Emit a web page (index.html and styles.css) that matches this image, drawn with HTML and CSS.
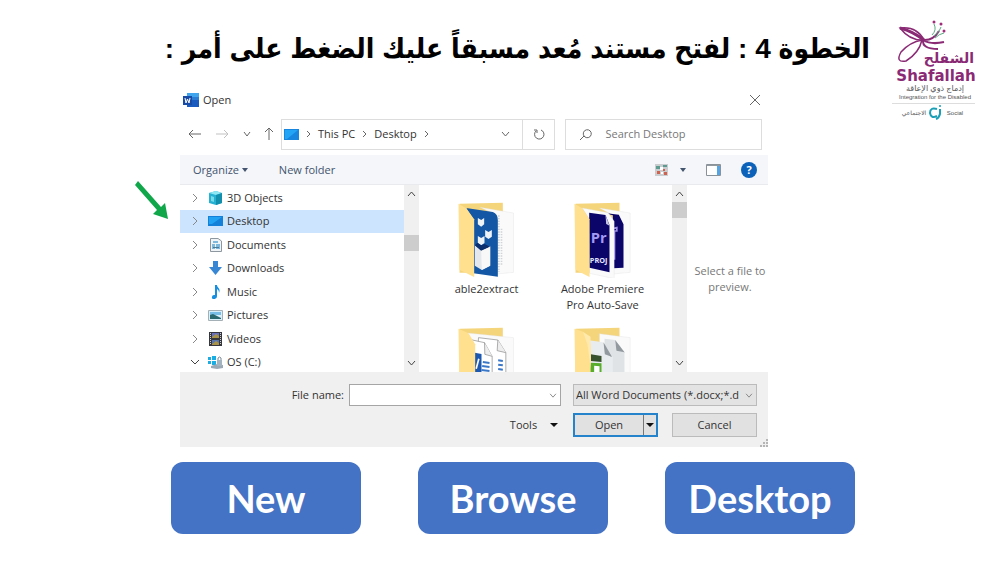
FILE: index.html
```
<!DOCTYPE html>
<html lang="ar">
<head>
    <meta charset="UTF-8">
    <meta name="viewport" content="width=device-width, initial-scale=1.0">
    <title>الخطوة 4</title>
    <link rel="stylesheet" href="styles.css">
</head>
<body>
    <div class="slide">
        <main class="content">
            <h1 dir="rtl">الخطوة 4 : لفتح مستند مُعد مسبقاً عليك الضغط على أمر :</h1>

            <section class="dialog" lang="en">
                <svg class="pointer" viewBox="0 0 34 40"><path d="M3 0 26 26 30 22 33 38 18 33 22 29 0 4z" fill="#10a64a"/></svg>

                <div class="title-bar">
                    <svg width="16" height="14" viewBox="0 0 16 14"><path d="M4 0h12v14H4z" fill="#185abd"/><path d="M4 0h12v4H4z" fill="#41a5ee"/><path d="M4 4h12v3H4z" fill="#2b7cd3"/><path d="M0 3h9v9H0z" fill="#174aa5"/><path d="m2 5 1 5 1.500-4 1.500 4 1-5" fill="none" stroke="#fff"/></svg>
                    <span>Open</span>
                    <button class="close" aria-label="Close"><svg width="12" height="12" viewBox="0 0 12 12"><path d="m1 1 10 10M11 1 1 11" class="line"/></svg></button>
                </div>

                <div class="nav-bar">
                    <div class="nav-buttons">
                        <button aria-label="Back"><svg width="14" height="12" viewBox="0 0 14 12"><path d="M13 6H1M5 2 1 6l4 4" class="line"/></svg></button>
                        <button aria-label="Forward" disabled><svg width="14" height="12" viewBox="0 0 14 12"><path d="M1 6h12M9 2l4 4-4 4" class="line"/></svg></button>
                        <button aria-label="Recent"><svg width="8" height="6" viewBox="0 0 8 6"><path d="m1 1 3 4 3-4" class="line"/></svg></button>
                        <button aria-label="Up"><svg width="10" height="14" viewBox="0 0 10 14"><path d="M5 13V1M1 5l4-4 4 4" class="line"/></svg></button>
                    </div>
                    <div class="address">
                        <svg width="15" height="11" viewBox="0 0 15 11"><path d="M0 0h15v11H0z" fill="#1686df"/><path d="M1 1h13L3 10H1z" fill="#24a4f4"/></svg>
                        <svg class="crumb" width="5" height="8" viewBox="0 0 5 8"><path d="m1 1 3 3-3 3" class="line"/></svg>
                        <a href="#">This PC</a>
                        <svg class="crumb" width="5" height="8" viewBox="0 0 5 8"><path d="m1 1 3 3-3 3" class="line"/></svg>
                        <a href="#">Desktop</a>
                        <svg class="crumb" width="5" height="8" viewBox="0 0 5 8"><path d="m1 1 3 3-3 3" class="line"/></svg>
                        <button class="history" aria-label="Previous locations"><svg width="9" height="6" viewBox="0 0 9 6"><path d="m1 1 3.500 4L8 1" class="line"/></svg></button>
                        <button class="refresh" aria-label="Refresh"><svg width="12" height="12" viewBox="0 0 12 12"><path d="M8 2a4.700 4.700 0 1 1-5 1M1 2h3v3" class="line"/></svg></button>
                    </div>
                    <div class="search">
                        <svg width="14" height="13" viewBox="0 0 14 13"><path d="M5 8 1 12M5 8a4 4 0 1 1 1 1z" class="line"/></svg>
                        <input type="text" placeholder="Search Desktop" aria-label="Search Desktop">
                    </div>
                </div>

                <div class="toolbar">
                    <button>Organize <span class="caret"></span></button>
                    <button>New folder</button>
                    <div class="views">
                        <button aria-label="Change view"><svg width="13" height="12" viewBox="0 0 13 12"><path d="M0 0h13v12H0z" fill="#c9cdd0"/><path d="M1 2h4v3H1zM8 1h4v2H8z" fill="#5d9b91"/><path d="M2 7h3v3H2zM8 5h2v2H8zM9 8h3v3H9z" fill="#d0614f"/><path d="M5 3h3v3H5zM6 8h2v2H6z" fill="#fff"/></svg></button>
                        <button aria-label="View options"><span class="caret"></span></button>
                        <button aria-label="Preview pane"><svg width="15" height="12" viewBox="0 0 15 12"><path d="M.5.5h14v11H.5z" fill="#fff" stroke="#8a9299"/><path d="M11 2h3v9h-3z" fill="#55a5e4"/><path d="M1 1h13v1H1z" fill="#929aa0"/></svg></button>
                        <button class="help" aria-label="Help">?</button>
                    </div>
                </div>

                <div class="browser">
                    <ul class="tree">
                        <li><svg class="chev" viewBox="0 0 6 10"><path d="m1 1 4 4-4 4"/></svg>
                            <svg class="icon" viewBox="0 0 15 14"><path d="m1 2 7-2 6 2v10l-6 2-7-2z" fill="#26b1d2"/><path d="m1 2 7-2 6 2-6 2z" fill="#8de8f4"/><path d="m8 4 6-2v10l-6 2z" fill="#138fae"/><path d="m3 5 3 1v5l-3-1z" fill="#75dcea"/></svg>3D Objects</li>
                        <li class="selected"><svg class="chev" viewBox="0 0 6 10"><path d="m1 1 4 4-4 4"/></svg>
                            <svg class="icon" viewBox="0 0 15 14"><path d="M0 2h15v10H0z" fill="#1480d8"/><path d="M1 3h13L4 10H1z" fill="#22a2f3"/></svg>Desktop</li>
                        <li><svg class="chev" viewBox="0 0 6 10"><path d="m1 1 4 4-4 4"/></svg>
                            <svg class="icon" viewBox="0 0 15 14"><path d="M2.500.5H10L13.500 3v10.500h-11z" fill="#f1f4f6" stroke="#8d979f"/><path d="M5 3h5v2H5zM4 6h3v5H4zM8 6h4v5H8z" fill="#7eb8dd"/><path d="M5 9h6v1H5z" fill="#4e7994"/></svg>Documents</li>
                        <li><svg class="chev" viewBox="0 0 6 10"><path d="m1 1 4 4-4 4"/></svg>
                            <svg class="icon" viewBox="0 0 15 14"><path d="M5 0h5v6h4l-6.500 8L1 6h4z" fill="#3787d5"/></svg>Downloads</li>
                        <li><svg class="chev" viewBox="0 0 6 10"><path d="m1 1 4 4-4 4"/></svg>
                            <svg class="icon" viewBox="0 0 15 14"><path d="M7 0h2c0 3 4 3 2 8 0-3-1-3-2-4v7c0 4-6 4-5 1 0-2 2-2 3-2z" fill="#168fe0"/></svg>Music</li>
                        <li><svg class="chev" viewBox="0 0 6 10"><path d="m1 1 4 4-4 4"/></svg>
                            <svg class="icon" viewBox="0 0 15 14"><path d="M.5 2.500h14v10H.5z" fill="#d9eff9" stroke="#a5b0b6"/><path d="M2 4h11v3H2z" fill="#78bde6"/><path d="m2 7 3-1 8 4v1H2z" fill="#2b6970"/></svg>Pictures</li>
                        <li><svg class="chev" viewBox="0 0 6 10"><path d="m1 1 4 4-4 4"/></svg>
                            <svg class="icon" viewBox="0 0 15 14"><path d="M1 0h13v14H1z" fill="#35363e"/><path d="M4 1h7v5H4z" fill="#6a6fba"/><path d="M4 8h7v5H4z" fill="#5874ae"/><path d="m4 5 4-3 3 2v2H4zM4 12l4-3 3 2v2H4z" fill="#a79247"/><path d="M2.500 1v12M12.500 1v12" stroke="#d0d0d0" stroke-dasharray="1 1"/></svg>Videos</li>
                        <li><svg class="chev open" viewBox="0 0 10 6"><path d="m1 1 4 4 4-4"/></svg>
                            <svg class="icon" viewBox="0 0 15 14"><path d="M0 2h3v3H0zM4 1h4v4H4zM0 6h3v3H0zM4 6h4v4H4z" fill="#1aade4"/><path d="m3 11 6-2 6 1v3l-6 1-6-1z" fill="#9aa9b6"/><path d="M9 5h5v6H9z" fill="#a4b3c0"/><path d="M10 5V3q1.500-2 3 0v2" fill="none" stroke="#7b8b98"/></svg>OS (C:)</li>
                    </ul>
                    <div class="scrollbar tree-scroll">
                        <svg viewBox="0 0 9 6"><path d="m1 5 3.500-4L8 5"/></svg>
                        <span class="thumb"></span>
                        <svg viewBox="0 0 9 6"><path d="m1 1 3.500 4L8 1"/></svg>
                    </div>

                    <div class="files">
                        <figure>
                            <svg viewBox="84 50 170 228">
                                <path d="M88 55 218 52v210H88z" fill="#f5d57c"/>
                                <path d="m150 66 100 17v178l-50 5V90z" fill="#fafafa" stroke="#ddd"/>
                                <path d="M206 90v170M214 130v110" stroke="#cfd4d8" stroke-width="5" stroke-dasharray="4 4"/>
                                <path d="m108 68 80 12q15 6 15 24v170l-73-10V102z" fill="#1457a5"/>
                                <path d="m143 98 10 6 9-6v19l-9 7-10-7zM165 134l10 6 10-6v20l-10 7-10-7zM143 152l10 6 10-6v21l-10 7-10-7z" fill="#eef3f8"/>
                                <path d="m134 180 18 15 28-13v59l-25 13-21-13z" fill="#e4e7eb"/>
                                <path d="m134 180 8-8 11 8 10-4 17 8-26 13z" fill="#0b2e6d"/>
                                <path d="m153 196 27-12v57l-25 13z" fill="#f8f8f8"/>
                                <path d="m85 55 23 14 24 33v173l-44-22z" fill="#ffe08f"/>
                            </svg>
                            <figcaption>able2extract</figcaption>
                        </figure>
                        <figure>
                            <svg viewBox="74 50 170 228">
                                <path d="M78 55 210 52v210H78z" fill="#f5d57c"/>
                                <path d="m150 68 92 15v178l-52 5V90z" fill="#fafafa" stroke="#ddd"/>
                                <path d="m160 82 48 6 14 29v130l-32 2V90z" fill="#0b0569"/>
                                <path d="m190 130 12-3v10h-7v86" fill="none" stroke="#9c8ee9" stroke-width="5"/>
                                <path d="m98 68 78 14 18 26v172l-74-16V102z" fill="#fafafa" stroke="#ddd"/>
                                <path d="m119 82 49 7 12 30v142l-60-14z" fill="#0b0569"/>
                                <path d="m168 89 2 27 10 5z" fill="#c9c7e6"/>
                                <text x="124" y="174" class="pr">Pr</text>
                                <text x="121" y="232" class="proj">PROJ</text>
                                <path d="m75 55 23 14 22 33v173l-42-22z" fill="#ffe08f"/>
                            </svg>
                            <figcaption>Adobe Premiere Pro Auto-Save</figcaption>
                        </figure>
                        <figure>
                            <svg viewBox="84 425 170 228">
                                <path d="M88 430 218 427v210H88z" fill="#f5d57c"/>
                                <path d="m112 443 138 14v180H132z" fill="#fafafa" stroke="#ddd"/>
                                <path d="m145 457 58 7 24 38v120h-90z" fill="#fff" stroke="#888" stroke-width="2"/>
                                <path d="m203 464-2 32 26 6" fill="#eee" stroke="#888" stroke-width="2"/>
                                <path d="m122 463 41 9 23 41v110h-52z" fill="#fff" stroke="#888" stroke-width="2"/>
                                <path d="m163 472 1 35 22 6" fill="#eee" stroke="#888" stroke-width="2"/>
                                <path d="M134 502l20 4v80h-20z" fill="#1c58b0"/>
                                <path d="M158 530l20 3M156 542l22 3M154 554l24 3M204 525l14 2M204 538l14 2M204 551l14 2" stroke="#3b78c8" stroke-width="6"/>
                                <path d="m138 550 8-30" stroke="#fff" stroke-width="5"/>
                                <path d="m85 430 30 14 20 33v173l-47-22z" fill="#ffe08f"/>
                            </svg>
                        </figure>
                        <figure>
                            <svg viewBox="74 425 170 228">
                                <path d="M78 430 210 427v210H78z" fill="#f5d57c"/>
                                <path d="m150 445 92 12v180H150z" fill="#fafafa" stroke="#ddd"/>
                                <path d="m165 460 32 4 28 37v130h-60z" fill="#dfe3e6"/>
                                <path d="m197 464 4 32 24 5z" fill="#929a9f"/>
                                <path d="m118 465 42 6 30 44v120h-70z" fill="#e9ecee"/>
                                <path d="m162 471 4 36 22 8z" fill="#929a9f"/>
                                <path d="m124 507 32 5v18l-32-3z" fill="#37502e"/>
                                <path d="m122 532 34 2v60h-34z" fill="#58ad2b"/>
                                <path d="m134 541 16 2v22h-16z" fill="#fff"/>
                                <path d="m75 430 28 10 20 38v172l-45-22z" fill="#ffe08f"/>
                                <path d="m101 440 22 14 1 96-10-72z" fill="#ffe9ac"/>
                            </svg>
                        </figure>
                    </div>
                    <div class="scrollbar">
                        <svg viewBox="0 0 9 6"><path d="m1 5 3.500-4L8 5"/></svg>
                        <span class="thumb"></span>
                        <svg viewBox="0 0 9 6"><path d="m1 1 3.500 4L8 1"/></svg>
                    </div>
                    <p class="preview">Select a file to preview.</p>
                </div>

                <form class="footer">
                    <label for="file-name">File name:</label>
                    <div class="field name-field">
                        <input type="text" id="file-name">
                        <svg viewBox="0 0 9 6"><path d="m1 1 3.500 4L8 1"/></svg>
                    </div>
                    <div class="field">
                        <select id="file-type" aria-label="File type">
                            <option>All Word Documents (*.docx;*.d</option>
                        </select>
                        <svg viewBox="0 0 9 6"><path d="m1 1 3.500 4L8 1"/></svg>
                    </div>
                    <button type="button" class="tools">Tools <span class="caret"></span></button>
                    <div class="actions">
                        <div class="split">
                            <button type="button">Open</button>
                            <button type="button" class="more" aria-label="More open options"><span class="caret"></span></button>
                        </div>
                        <button type="button" class="cancel">Cancel</button>
                    </div>
                    <svg class="grip" viewBox="0 0 8 8"><path d="M6 0h2v2H6zM3 3h2v2H3zM6 3h2v2H6zM0 6h2v2H0zM3 6h2v2H3zM6 6h2v2H6z" fill="#b5b5b5"/></svg>
                </form>
            </section>

            <div class="answers" lang="en">
                <button>New</button>
                <button>Browse</button>
                <button>Desktop</button>
            </div>
        </main>

        <aside class="logo">
            <svg viewBox="0 0 110 115" role="img" aria-label="Shafallah">
                <g fill="none" stroke="#8a2a75" stroke-width="1.500">
                    <path d="M20 18q17-2 24 12Q30 31 20 18zM42 30Q30 32 21 42q-6 11 5 9 13-8 16-21z"/>
                    <path d="M43 30q10 1 16-9M43 30q8 5 21 2M43 30q-1 9 15 9" stroke-width="2"/>
                    <path d="M20 18q12 3 24 12" stroke-width="3"/>
                    <path d="M52 25q5-5 2-11M54 26q6-4 7-9M55 28q4-4 9-5" stroke="#5bab82" stroke-width="1"/>
                </g>
                <g fill="#a02b78"><circle cx="54" cy="12" r="1.500"/><circle cx="61" cy="14" r="1.500"/><circle cx="64" cy="21" r="1.500"/></g>
                <text x="94" y="53" class="logo-ar" text-anchor="end">الشفلح</text>
                <text x="56" y="71" class="logo-en" text-anchor="middle">Shafallah</text>
                <text x="55" y="81" class="logo-sub logo-sub-ar" text-anchor="middle">إدماج ذوي الإعاقة</text>
                <text x="55" y="89" class="logo-sub" text-anchor="middle">Integration for the Disabled</text>
                <path d="M12 93.500h83" stroke="#ddd"/>
                <text x="34" y="105" class="logo-sub" text-anchor="middle">الاجتماعي</text>
                <path d="M57 99q-7-2-7 4 1 6 7 3M60 99v5q-1 4-4 5" fill="none" stroke="#19a0b7" stroke-width="2"/><circle cx="60" cy="96" r="1" fill="#19a0b7"/>
                <text x="75" y="105" class="logo-sub" text-anchor="middle">Social</text>
            </svg>
        </aside>
    </div>
</body>
</html>
```
FILE: styles.css
```
* {
    box-sizing: border-box;
}
body {
    margin: 0;
    background-color: #fff;
    font-family: "Open Sans", "Noto Sans", sans-serif;
}
button, input, select {
    font: inherit;
    color: inherit;
    margin: 0;
    padding: 0;
    border: 0;
    background: none;
    border-radius: 0;
}
button {
    cursor: pointer;
}
svg {
    display: block;
    flex-shrink: 0;
}
.slide {
    display: grid;
    grid-template-columns: 87% 1fr;
}
h1 {
    margin: 0;
    padding-top: 25px;
    height: 88px;
    font-family: "Liberation Sans", "DejaVu Sans Condensed", "DejaVu Sans", sans-serif;
    font-size: 28px;
    line-height: 48px;
    color: #000;
    white-space: nowrap;
}

/* open file dialog */
.dialog {
    position: relative;
    margin-left: 180px;
    margin-right: 102px;
    font-size: 11px;
    line-height: 16px;
    color: #333;
}
.pointer {
    position: absolute;
    left: -45px;
    top: 93px;
    width: 34px;
    height: 40px;
}
.line {
    fill: none;
    stroke: #666;
}
.title-bar {
    display: flex;
    align-items: center;
    gap: 4px;
    height: 24px;
    padding: 0 7px 0 3px;
}
.close {
    margin-left: auto;
}
.nav-bar {
    display: grid;
    grid-template-columns: 93px 275fr 207fr;
    align-items: center;
    height: 44px;
    padding: 0 6px 0 8px;
}
.nav-buttons {
    display: flex;
    align-items: center;
    justify-content: space-between;
    margin-right: 7px;
}
.nav-buttons button:disabled {
    opacity: 0.4;
}
.address, .search {
    display: flex;
    align-items: center;
    height: 31px;
    border: 1px solid #ddd;
}
.address {
    padding-left: 2px;
}
.address a {
    color: inherit;
    text-decoration: none;
}
.crumb {
    margin: 0 7px;
}
.history {
    margin-left: auto;
    padding: 8px 12px;
}
.refresh {
    display: flex;
    align-items: center;
    justify-content: center;
    width: 32px;
    height: 100%;
    border-left: 1px solid #ddd;
}
.search {
    margin-left: 10px;
    padding-left: 13px;
    gap: 12px;
}
.search input {
    width: 100%;
    min-width: 0;
}
.search input::placeholder {
    color: #777;
}
.toolbar {
    display: flex;
    align-items: center;
    gap: 31px;
    height: 30px;
    margin-top: -1px;
    padding: 0 11px 0 13px;
    background-color: #f4f6f9;
    border-bottom: 1px solid #e8eaed;
    color: #43546e;
}
.caret {
    display: inline-block;
    vertical-align: middle;
    margin-bottom: 2px;
    border: 3px solid transparent;
    border-top: 4px solid currentColor;
    border-bottom: 0;
}
.views {
    display: flex;
    align-items: center;
    margin-left: auto;
    gap: 20px;
}
.views button:first-child {
    margin-right: -8px;
}
.help {
    width: 16px;
    height: 16px;
    border-radius: 50%;
    background-color: #0b62b8;
    color: #fff;
    font-weight: bold;
}

/* folder tree, files and preview */
.browser {
    display: grid;
    grid-template-columns: 224fr 15px 253fr 15px 81fr;
    grid-template-rows: 100%;
    height: 187px;
    overflow: hidden;
}
.tree {
    display: grid;
    grid-template-rows: repeat(8, 1fr);
    height: 189px;
    margin: 0;
    padding: 1px 0 0;
    list-style: none;
}
.tree li {
    display: flex;
    align-items: center;
    padding-left: 12px;
}
.tree .selected {
    background-color: #cce4fd;
}
.chev {
    width: 6px;
    height: 10px;
    margin-right: 10px;
    fill: none;
    stroke: #888;
}
.chev.open {
    width: 10px;
    height: 6px;
    margin: 0 8px 0 -2px;
    stroke: #444;
}
.icon {
    width: 15px;
    height: 14px;
    margin-right: 4px;
}
.scrollbar {
    display: flex;
    flex-direction: column;
    align-items: center;
    padding: 6px 0;
    background-color: #f0f0f0;
}
.scrollbar svg {
    width: 9px;
    height: 6px;
    fill: none;
    stroke: #444;
}
.scrollbar svg:last-child {
    margin-top: auto;
}
.thumb {
    width: 100%;
    height: 16px;
    margin-top: 5px;
    background-color: #cdcdcd;
}
.tree-scroll .thumb {
    margin-top: 38px;
}
.files {
    display: grid;
    grid-template-columns: 116px 116px;
    grid-auto-rows: 112px;
    justify-content: center;
    align-content: start;
    row-gap: 13px;
    padding: 17px 2px 0 0;
}
.files figure {
    margin: 0;
    text-align: center;
}
.files figure svg {
    width: 57px;
    height: 76px;
    margin: 0 auto 3px;
}
.files figcaption {
    padding: 0 12px;
}
.pr {
    font: bold 44px "Open Sans", sans-serif;
    fill: #a29af2;
}
.proj {
    font: bold 22px "Open Sans", sans-serif;
    fill: #e6e4fb;
}
.preview {
    align-self: center;
    margin: 0;
    padding-left: 5px;
    text-align: center;
    color: #777;
}

/* file name and actions */
.footer {
    position: relative;
    display: grid;
    grid-template-columns: 169px 224fr 184fr;
    align-items: center;
    row-gap: 7px;
    padding: 12px 11px 10px 0;
    background-color: #f0f0f0;
}
.footer label {
    text-align: right;
    padding-right: 5px;
}
.field {
    display: grid;
    align-items: center;
}
.name-field {
    margin-right: 12px;
}
.field input, .field select {
    grid-area: 1 / 1;
    width: 100%;
    height: 22px;
    border: 1px solid #a5a5a5;
}
.field input {
    background-color: #fff;
    padding: 0 18px 0 4px;
}
.field select {
    appearance: none;
    padding-left: 2px;
    border-color: #bbb;
    background-color: #e3e3e3;
}
.field svg {
    grid-area: 1 / 1;
    justify-self: end;
    width: 8px;
    height: 5px;
    margin-right: 4px;
    fill: none;
    stroke: #777;
    pointer-events: none;
}
.tools {
    grid-column: 1 / 3;
    justify-self: end;
    margin-right: 12px;
}
.tools .caret {
    margin: 0 3px 2px 10px;
}
.tools .caret, .more .caret {
    border-width: 4px 4px 0;
    color: #111;
}
.actions {
    display: grid;
    grid-template-columns: 1fr 1fr;
    gap: 14px;
}
.split {
    display: flex;
    height: 24px;
    border: 2px solid #2583cc;
    background-color: #e1e1e1;
}
.split button {
    flex: 1;
}
.split .more {
    flex: 0 0 13px;
    border-left: 1px solid #777;
}
.cancel {
    height: 24px;
    border: 1px solid #bbb;
    background-color: #e1e1e1;
}
.grip {
    position: absolute;
    right: 0;
    bottom: 0;
    width: 8px;
    height: 8px;
}

.answers {
    display: flex;
    justify-content: space-between;
    gap: 57px;
    padding: 15px 15px 0 171px;
}
.answers button {
    flex: 1;
    height: 72px;
    border-radius: 12px;
    background-color: #4472c4;
    color: #fff;
    font-family: Lato, sans-serif;
    font-size: 38px;
    font-weight: bold;
}

.logo {
    padding: 10px 10px 0;
}
.logo svg {
    width: 110px;
    height: 115px;
}
.logo-ar {
    font: bold 14px "DejaVu Sans", sans-serif;
    fill: #8a2a75;
}
.logo-en {
    font: bold 15px "DejaVu Sans", sans-serif;
    fill: #8a2a75;
}
.logo-sub {
    font: 6px "Liberation Sans", "DejaVu Sans", sans-serif;
    fill: #555;
}
.logo-sub-ar {
    font-size: 8px;
}
```
